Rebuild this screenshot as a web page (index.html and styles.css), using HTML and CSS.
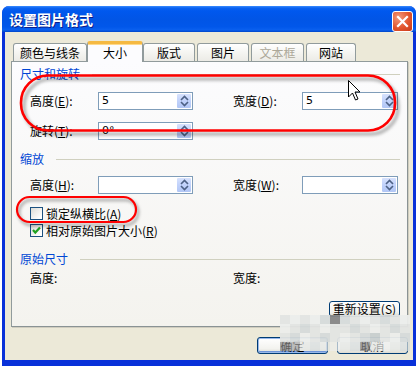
FILE: index.html
```html
<!DOCTYPE html>
<html>
<head>
<meta charset="utf-8">
<title>设置图片格式</title>
<link rel="stylesheet" href="styles.css">
</head>
<body>
<div class="window">
  <div class="titlebar">
    <span class="title">设置图片格式</span>
    <span class="close"><svg width="13" height="13" viewBox="0 0 13 13"><path d="M2 2 L11 11 M11 2 L2 11" stroke="#fff" stroke-width="2.2" stroke-linecap="square"/></svg></span>
  </div>
  <div class="client">
    <div class="tabs">
      <div class="tab t1">颜色与线条</div>
      <div class="tab sel">大小</div>
      <div class="tab t3">版式</div>
      <div class="tab t4">图片</div>
      <div class="tab t5 disabled">文本框</div>
      <div class="tab t6">网站</div>
    </div>
    <div class="panel">
      <div class="group g1"><span class="gtitle">尺寸和旋转</span><span class="gline"></span></div>
      <div class="row r1">
        <span class="lbl">高度(<u>E</u>):</span>
        <div class="spin w1"><span class="val">5</span><span class="sb"><svg width="9" height="12" viewBox="0 0 9 12"><path d="M1 5 L4.5 1.5 L8 5 M1 7 L4.5 10.5 L8 7" fill="none" stroke="#4d6185" stroke-width="1.6"/></svg></span></div>
        <span class="lbl lbl2">宽度(<u>D</u>):</span>
        <div class="spin w2"><span class="val">5</span><span class="sb"><svg width="9" height="12" viewBox="0 0 9 12"><path d="M1 5 L4.5 1.5 L8 5 M1 7 L4.5 10.5 L8 7" fill="none" stroke="#4d6185" stroke-width="1.6"/></svg></span></div>
      </div>
      <div class="row r2">
        <span class="lbl">旋转(<u>T</u>):</span>
        <div class="spin w1"><span class="val">0°</span><span class="sb"><svg width="9" height="12" viewBox="0 0 9 12"><path d="M1 5 L4.5 1.5 L8 5 M1 7 L4.5 10.5 L8 7" fill="none" stroke="#4d6185" stroke-width="1.6"/></svg></span></div>
      </div>
      <div class="group g2"><span class="gtitle">缩放</span><span class="gline"></span></div>
      <div class="row r3">
        <span class="lbl">高度(<u>H</u>):</span>
        <div class="spin w1"><span class="val"></span><span class="sb"><svg width="9" height="12" viewBox="0 0 9 12"><path d="M1 5 L4.5 1.5 L8 5 M1 7 L4.5 10.5 L8 7" fill="none" stroke="#4d6185" stroke-width="1.6"/></svg></span></div>
        <span class="lbl lbl2">宽度(<u>W</u>):</span>
        <div class="spin w2"><span class="val"></span><span class="sb"><svg width="9" height="12" viewBox="0 0 9 12"><path d="M1 5 L4.5 1.5 L8 5 M1 7 L4.5 10.5 L8 7" fill="none" stroke="#4d6185" stroke-width="1.6"/></svg></span></div>
      </div>
      <div class="check c1"><span class="box"></span><span class="ctext">锁定纵横比(<u>A</u>)</span></div>
      <div class="check c2"><span class="box"><svg width="11" height="11" viewBox="0 0 11 11"><path d="M2 5 L4.3 7.6 L9 2.6" fill="none" stroke="#21a121" stroke-width="2.2"/></svg></span><span class="ctext">相对原始图片大小(<u>R</u>)</span></div>
      <div class="group g3"><span class="gtitle">原始尺寸</span><span class="gline"></span></div>
      <div class="row r4">
        <span class="lbl">高度:</span>
        <span class="spacer"></span>
        <span class="lbl lbl2">宽度:</span>
      </div>
      <div class="resetrow"><button class="btn reset">重新设置(<u>S</u>)</button></div>
    </div>
    <div class="buttons">
      <button class="btn def">确定</button>
      <button class="btn">取消</button>
    </div>
  </div>
</div>

<div class="mosaic">
  <i class="a"></i><i class="c"></i><i class="a"></i><i class="c"></i><i class="b"></i><i class="k"></i><i class="b"></i><i class="a"></i><i class="c"></i><i class="a"></i><i class="b"></i><i class="a"></i><i class="c"></i>
  <i class="c"></i><i class="a"></i><i class="b"></i><i class="a"></i><i class="c"></i><i class="a"></i><i class="a"></i><i class="b"></i><i class="a"></i><i class="c"></i><i class="a"></i><i class="b"></i><i class="a"></i>
  <i class="a"></i><i class="b"></i><i class="c"></i><i class="a"></i><i class="b"></i><i class="a"></i><i class="c"></i><i class="a"></i><i class="b"></i><i class="d"></i><i class="a"></i><i class="c"></i><i class="b"></i>
  <i class="k t"></i><i class="m t"></i><i class="a t"></i><i class="b t"></i><i class="a t"></i><i class="c t"></i><i class="a t"></i><i class="b t"></i><i class="k t"></i><i class="a t"></i><i class="c t"></i><i class="a t"></i><i class="b t"></i>
</div>

<svg class="annot" width="417" height="366" viewBox="0 0 417 366">
  <defs>
    <filter id="blur" x="-10%" y="-30%" width="120%" height="160%"><feGaussianBlur stdDeviation="1.6"/></filter>
  </defs>
  <rect x="24" y="79" width="374" height="55" rx="27" fill="none" stroke="#000" stroke-opacity="0.28" stroke-width="3.5" filter="url(#blur)"/>
  <rect x="21" y="75.5" width="374" height="55" rx="27" fill="none" stroke="#ff0000" stroke-width="2.6"/>
  <rect x="19" y="200" width="119" height="25" rx="12.5" fill="none" stroke="#000" stroke-opacity="0.28" stroke-width="3" filter="url(#blur)"/>
  <rect x="17" y="197" width="119" height="25" rx="12.5" fill="none" stroke="#ff0000" stroke-width="2.2"/>
  <path d="M348.5 80.5 L348.5 97 L352.5 93 L355.5 100 L358 99 L355 92 L360 92 Z" fill="#fff" stroke="#000" stroke-width="1" stroke-linejoin="miter"/>
</svg>
</body>
</html>
```

FILE: styles.css
```css
* { box-sizing: border-box; }
html, body { margin: 0; padding: 0; background: #fff; overflow: hidden; }
body {
  width: 417px;
  height: 366px;
  position: relative;
  font-family: "Noto Sans CJK SC", "Noto Sans", sans-serif;
  font-size: 12px;
  color: #000;
}
u { text-decoration: underline; text-underline-offset: 1px; }

.window {
  margin: 6px 0 0 2px;
  width: 414px;
  height: 370px;
  background: #0831d9;
  border-radius: 7px 7px 0 0;
  padding: 0 3px;
  display: flex;
  flex-direction: column;
}
.titlebar {
  height: 26px;
  margin: 0 -3px;
  border-radius: 7px 7px 0 0;
  background: linear-gradient(#3a8cff 0, #0a62f0 2px, #0058ee 5px, #0155e6 50%, #0157ea 80%, #0a60ef 92%, #0046c8 100%);
  display: flex;
  align-items: flex-start;
  justify-content: space-between;
  padding: 0 3px 0 7px;
}
.title {
  color: #fff;
  font-weight: bold;
  font-size: 14px;
  line-height: 26px;
  text-shadow: 1px 1px 0 #0a1f8c;
}
.close {
  margin-top: 5px;
  width: 21px;
  height: 21px;
  border: 1px solid #fff;
  border-radius: 3px;
  background: radial-gradient(circle at 30% 30%, #f29a7e 0, #e2552d 55%, #c7391a 100%);
  display: flex;
  align-items: center;
  justify-content: center;
}
.close svg { display: block; }

.client {
  height: 328px;
  background: #ece9d8;
  padding: 9px 5px 0 6px;
}
.tabs {
  height: 20px;
  display: flex;
  align-items: flex-end;
  padding-left: 2px;
  position: relative;
  z-index: 2;
}
.tab {
  height: 18px;
  border: 1px solid #919b9c;
  border-bottom: none;
  border-radius: 3px 3px 0 0;
  background: linear-gradient(#ffffff, #f3f3ef 60%, #ecebe6);
  display: flex;
  align-items: center;
  justify-content: center;
  line-height: 14px;
}
.t1 { width: 74px; }
.sel {
  width: 56px;
  height: 21px;
  margin-bottom: -1px;
  background: #fcfcfe;
  border-top: 3px solid #f5b942;
  box-shadow: inset 0 1px 0 #ffd98a;
  padding-bottom: 1px;
}
.t3 { width: 52px; }
.t4 { width: 52px; margin-left: 2px; }
.t5 { width: 53px; margin-left: 2px; }
.t6 { width: 50px; margin-left: 2px; }
.disabled { color: #aca899; }

.panel {
  width: 397px;
  height: 266px;
  border: 1px solid #919b9c;
  border-right-color: #8a9394;
  border-bottom: 1px solid #8a9394;
  box-shadow: 1px 1px 0 #d0cdbf;
  background: linear-gradient(#fcfcfe, #f4f3ee);
  position: relative;
  z-index: 1;
}
.group {
  height: 14px;
  display: flex;
  align-items: center;
  margin: 0 7px 0 8px;
}
.gtitle { color: #0046d5; line-height: 14px; white-space: nowrap; }
.gline { flex: 1; height: 1px; background: #d0d0bf; margin-left: 12px; margin-top: 1px; }
.g1 { margin-top: 5px; }
.g2 { margin-top: 12px; }
.g3 { margin-top: 15px; }

.row {
  display: flex;
  align-items: center;
  height: 18px;
  padding-left: 18px;
}
.r1 { margin-top: 11px; }
.r2 { margin-top: 12px; }
.r3 { margin-top: 10px; }
.r4 { margin-top: 5px; height: 14px; }
.lbl { width: 68px; white-space: nowrap; line-height: 14px; }
.lbl2 { width: 69px; margin-left: 40px; }
.spacer { width: 95px; }

.spin {
  height: 18px;
  border: 1px solid #7f9db9;
  background: #fff;
  display: flex;
  align-items: stretch;
}
.w1 { width: 95px; }
.w2 { width: 96px; }
.val {
  flex: 1;
  padding-left: 3px;
  font-family: "DejaVu Sans", "Liberation Sans", sans-serif;
  font-size: 11px;
  line-height: 16px;
}
.sb {
  width: 16px;
  border: 1px solid #fff;
  border-radius: 2px;
  background: linear-gradient(#d7e2fd, #c1d2fb 50%, #b1c6f5);
  display: flex;
  align-items: center;
  justify-content: center;
}
.sb svg { display: block; }

.check {
  display: flex;
  align-items: center;
  height: 13px;
  padding-left: 18px;
}
.c1 { margin-top: 13px; }
.c2 { margin-top: 4px; }
.box {
  width: 13px;
  height: 13px;
  border: 1px solid #1c5180;
  background: linear-gradient(135deg, #dcdcd7, #ffffff 85%);
  display: flex;
  align-items: center;
  justify-content: center;
}
.box svg { display: block; }
.ctext { margin-left: 3px; line-height: 13px; white-space: nowrap; }

.resetrow {
  margin-top: 16px;
  display: flex;
  justify-content: flex-end;
  padding-right: 7px;
}
.btn {
  font-family: "Noto Sans CJK SC", "Noto Sans", sans-serif;
  font-size: 12px;
  color: #000;
  border: 1px solid #003c74;
  border-radius: 3px;
  background: linear-gradient(#ffffff, #f3f3ef 70%, #dcdbd3);
  padding: 0;
  line-height: 14px;
  display: flex;
  align-items: center;
  justify-content: center;
}
.reset { width: 71px; height: 16px; }

.buttons {
  margin-top: 10px;
  display: flex;
  justify-content: flex-end;
  gap: 9px;
}
.buttons .btn { width: 71px; height: 17px; }
.def { box-shadow: inset 0 0 0 1px #98b8ea, inset 0 -1px 0 1px #6d94d8; }

.mosaic {
  position: absolute;
  left: 280px;
  top: 315px;
  width: 132px;
  display: grid;
  grid-template-columns: repeat(13, 10px);
  grid-auto-rows: 9px;
  opacity: 0.95;
  z-index: 5;
}
.mosaic i { display: block; }
.mosaic .a { background: #e3e5e3; }
.mosaic .b { background: #d6dbdb; }
.mosaic .c { background: #eceeec; }
.mosaic .d { background: #c9cfcf; }
.mosaic .k { background: #868686; }
.mosaic .m { background: #a4a6a6; }
.mosaic .t { opacity: 0.75; }

.annot {
  position: absolute;
  left: 0;
  top: 0;
  z-index: 10;
  pointer-events: none;
}
```
